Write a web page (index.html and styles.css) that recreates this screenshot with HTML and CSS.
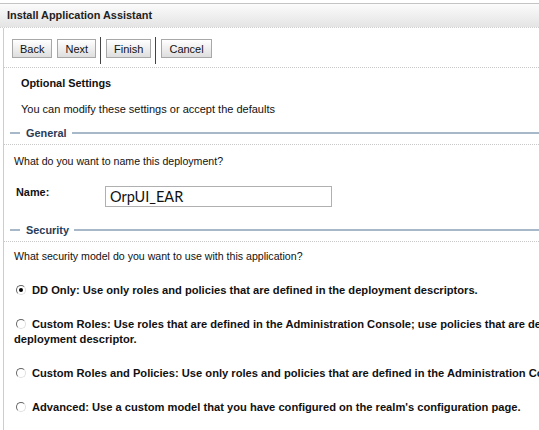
FILE: index.html
```html
<!DOCTYPE html>
<html>
<head>
<meta charset="utf-8">
<link rel="stylesheet" href="styles.css">
</head>
<body>
<div class="titlebar">Install Application Assistant</div>
<div class="page">
  <div class="toolbar">
    <button class="btn">Back</button>
    <button class="btn">Next</button>
    <span class="sep"></span>
    <button class="btn">Finish</button>
    <span class="sep"></span>
    <button class="btn">Cancel</button>
  </div>
  <div class="intro">
    <div class="heading">Optional Settings</div>
    <div class="desc">You can modify these settings or accept the defaults</div>
  </div>
  <div class="legend legend-general"><span class="lead"></span><span class="legend-text">General</span><span class="rule"></span></div>
  <div class="section">
    <div class="question">What do you want to name this deployment?</div>
    <div class="field">
      <label class="field-label">Name:</label>
      <div class="input">OrpUI_EAR</div>
    </div>
  </div>
  <div class="legend legend-security"><span class="lead"></span><span class="legend-text">Security</span><span class="rule"></span></div>
  <div class="section">
    <div class="question question-security">What security model do you want to use with this application?</div>
    <div class="options">
      <p class="option"><span class="radio checked"></span>DD Only: Use only roles and policies that are defined in the deployment descriptors.</p>
      <p class="option"><span class="radio"></span>Custom Roles: Use roles that are defined in the Administration Console; use policies that are defined in the<br>deployment descriptor.</p>
      <p class="option"><span class="radio"></span>Custom Roles and Policies: Use only roles and policies that are defined in the Administration Console.</p>
      <p class="option"><span class="radio"></span>Advanced: Use a custom model that you have configured on the realm's configuration page.</p>
    </div>
  </div>
</div>
</body>
</html>
```
FILE: styles.css
```css
html, body {
  margin: 0;
  padding: 0;
  overflow: hidden;
  background: #fff;
}
body {
  font-family: "Liberation Sans", Arial, sans-serif;
  font-size: 10.6px;
  color: #111;
  width: 539px;
  height: 430px;
}
.titlebar {
  margin-top: 3px;
  height: 23px;
  line-height: 23px;
  border-top: 1px solid #c4c4c4;
  border-bottom: 1px dotted #cfcfcf;
  background: linear-gradient(#fbfbfb, #e4e4e4);
  padding-left: 7px;
  font-weight: bold;
  font-size: 10.9px;
  color: #222;
}
.page {
  margin-left: 3px;
  border-left: 1px solid #cdcdcd;
  height: 420px;
  white-space: nowrap;
}
.toolbar {
  display: flex;
  align-items: flex-start;
  padding: 11px 0 0 8px;
  height: 28px;
  border-bottom: 1px dotted #c8c8c8;
}
.btn {
  font-family: "Liberation Sans", Arial, sans-serif;
  font-size: 11px;
  color: #111;
  height: 19px;
  padding: 0 7px;
  margin: 0 5px 0 0;
  border: 1px solid #a8a8a8;
  border-radius: 0;
  background: linear-gradient(#ffffff, #dedede);
}
.sep {
  width: 1px;
  height: 27px;
  margin: -2px 5px 0 -1px;
  background: #444;
}
.intro {
  padding: 8px 0 0 17px;
}
.heading {
  font-weight: bold;
  font-size: 10.9px;
  height: 14px;
  line-height: 14px;
}
.desc {
  margin-top: 12px;
  height: 14px;
  line-height: 14px;
  font-size: 11px;
}
.legend {
  display: flex;
  align-items: center;
  height: 14px;
  padding-left: 6px;
  padding-bottom: 4px;
  border-bottom: 1px dotted #c8c8c8;
}
.legend-general {
  margin-top: 10px;
}
.legend-security {
  margin-top: 16px;
}
.lead {
  width: 10px;
  height: 2px;
  background: #a7b9c8;
}
.legend-text {
  font-weight: bold;
  font-size: 10.9px;
  color: #2a3c58;
  padding: 0 5px 0 6px;
}
.rule {
  flex: 1;
  height: 2px;
  background: #a7b9c8;
}
.section {
  padding-left: 10px;
}
.question {
  margin-top: 9px;
  height: 14px;
  line-height: 14px;
}
.question-security {
  margin-top: 7px;
}
.field {
  display: flex;
  align-items: flex-start;
  margin-top: 18px;
  height: 21px;
}
.field-label {
  font-weight: bold;
  font-size: 10.9px;
  width: 89px;
  padding-left: 2px;
  margin-top: -1px;
  line-height: 14px;
}
.input {
  width: 221px;
  height: 19px;
  line-height: 19px;
  border: 1px solid #b0b0b0;
  padding-left: 4px;
  font-family: Lato, "Noto Sans", sans-serif;
  font-size: 14.5px;
  color: #111;
}
.options {
  padding-top: 20px;
}
.option {
  margin: 0 0 19px 0;
  font-weight: bold;
  font-size: 11.15px;
  line-height: 15px;
}
.radio {
  display: inline-block;
  width: 10px;
  height: 10px;
  margin: 0 6px 0 2px;
  vertical-align: -1px;
  border-radius: 50%;
  box-sizing: border-box;
  border: 1.5px solid;
  border-color: #666 #e0e0e0 #e0e0e0 #666;
  position: relative;
}
.radio.checked::after {
  content: "";
  position: absolute;
  left: 1.5px;
  top: 1.5px;
  width: 4px;
  height: 4px;
  border-radius: 50%;
  background: #000;
}
```
